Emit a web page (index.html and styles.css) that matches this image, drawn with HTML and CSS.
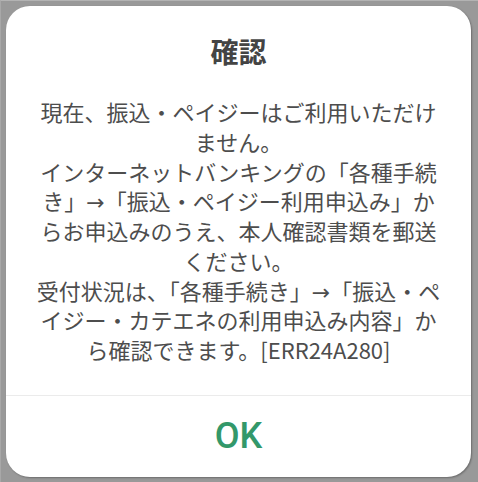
FILE: index.html
```html
<!DOCTYPE html>
<html lang="ja">
<head>
<meta charset="utf-8">
<link rel="stylesheet" href="styles.css">
</head>
<body>
<div class="frame">
  <div class="dialog">
    <h1 class="title">確認</h1>
    <p class="message">
      <span class="line">現在、振込・ペイジーはご利用いただけ</span>
      <span class="line">ません。</span>
      <span class="line">インターネットバンキングの「各種手続</span>
      <span class="line">き」<span class="arrow">→</span>「振込・ペイジー利用申込み」か</span>
      <span class="line">らお申込みのうえ、本人確認書類を郵送</span>
      <span class="line">ください。</span>
      <span class="line">受付状況は、「各種手続き」<span class="arrow">→</span>「振込・ペ</span>
      <span class="line">イジー・カテエネの利用申込み内容」か</span>
      <span class="line">ら確認できます。[ERR24A280]</span>
    </p>
    <div class="actions">
      <button class="ok" type="button">OK</button>
    </div>
  </div>
</div>
</body>
</html>
```
FILE: styles.css
```css
html, body {
  margin: 0;
  padding: 0;
  background: #999999;
}

.frame {
  box-sizing: border-box;
  width: 478px;
  height: 482px;
  padding: 5px 7px 5px 5px;
  border-top: 1px solid #b3b3b3;
  border-left: 1px solid #a8a8a8;
  display: flex;
}

.dialog {
  flex: 1;
  background: #ffffff;
  border-radius: 24px;
  box-shadow: 1px 1px 2px rgba(0, 0, 0, 0.3);
  display: flex;
  flex-direction: column;
  font-family: "Noto Sans CJK JP", "Noto Sans", sans-serif;
  color: #4d4d4d;
  overflow: hidden;
}

.title {
  margin: 27px 0 0;
  font-size: 28px;
  line-height: 36px;
  font-weight: 700;
  text-align: center;
  color: #444444;
}

.message {
  margin: 28px 0 0;
  padding: 0 0 30px;
  font-size: 22px;
  line-height: 29.75px;
  text-align: center;
  border-bottom: 1.5px solid #ebebeb;
}

.line {
  display: block;
  white-space: nowrap;
}

.arrow {
  font-family: "DejaVu Sans", sans-serif;
  font-size: 22px;
  font-weight: 400;
  line-height: 0;
}

.actions {
  flex: 1;
  display: flex;
  align-items: center;
  justify-content: center;
}

.ok {
  border: 0;
  background: transparent;
  padding: 0;
  font-family: Roboto, "Liberation Sans", sans-serif;
  font-size: 36px;
  font-weight: 500;
  line-height: 40px;
  color: #33986a;
}
```
